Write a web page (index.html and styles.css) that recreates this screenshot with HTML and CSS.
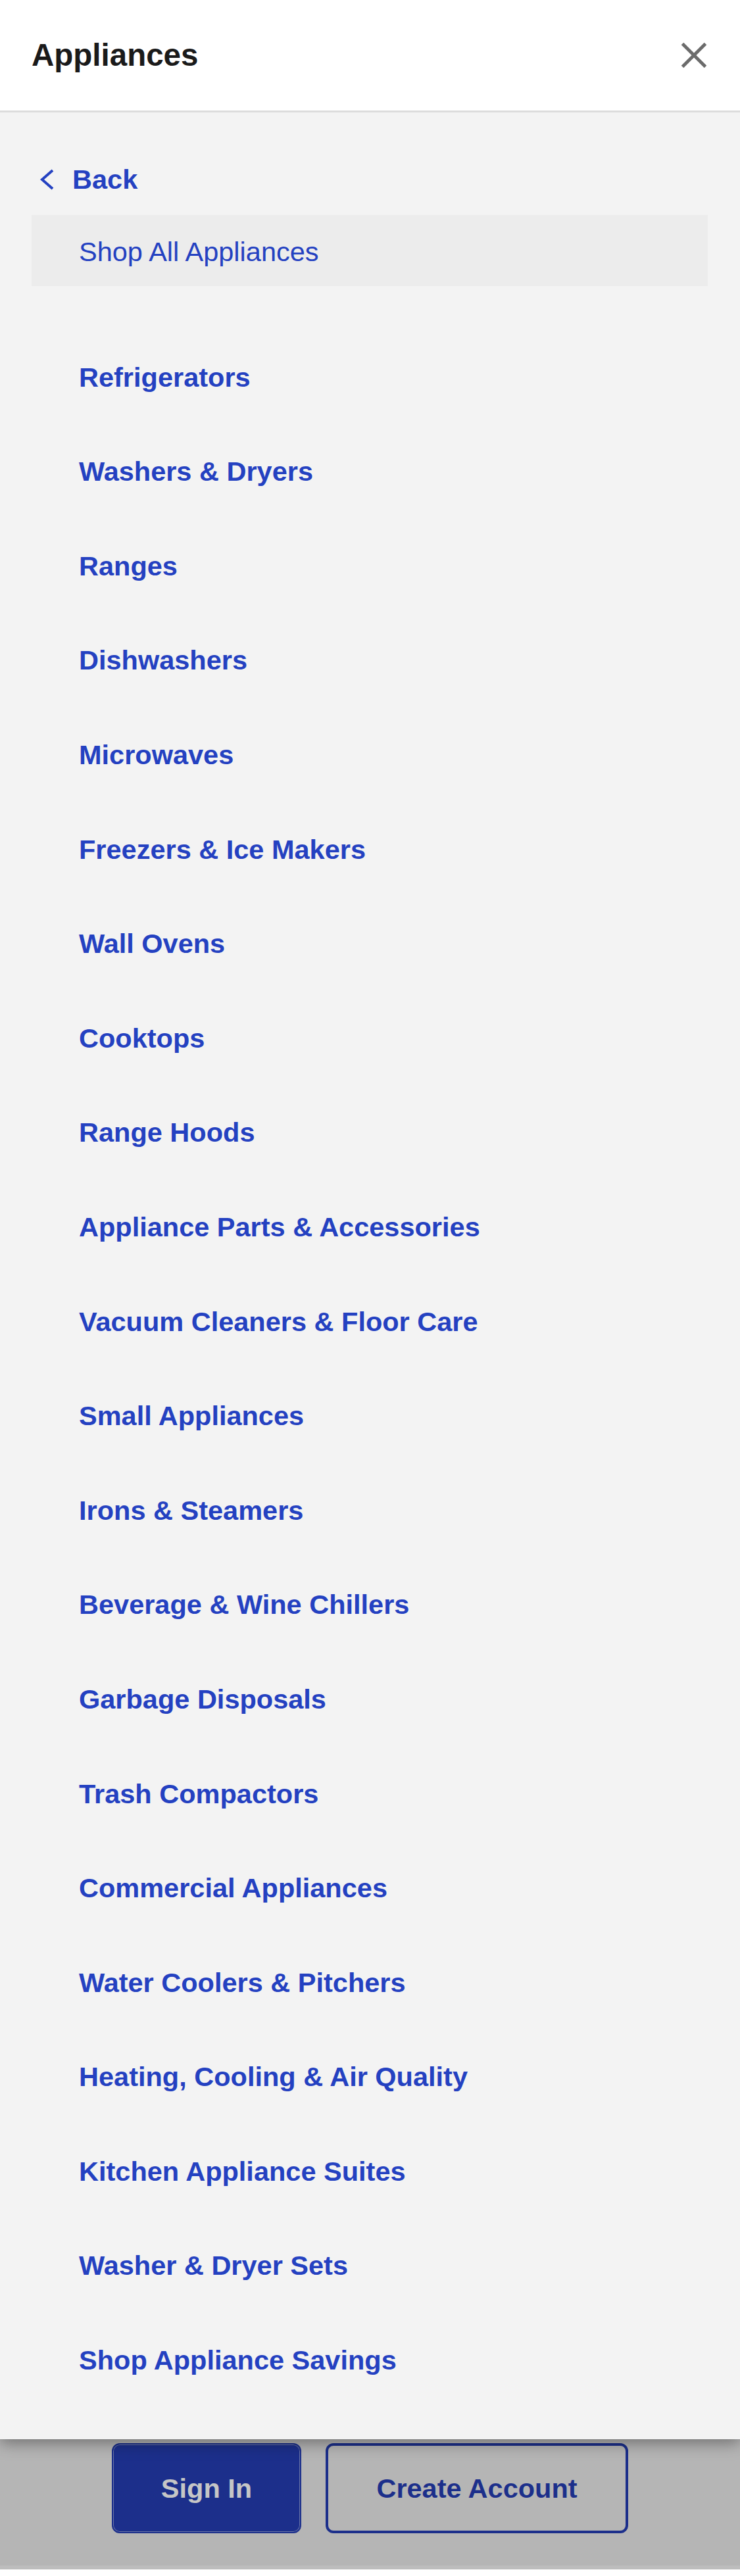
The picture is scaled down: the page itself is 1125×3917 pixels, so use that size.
FILE: index.html
```html
<!DOCTYPE html>
<html lang="en">
<head>
<meta charset="utf-8">
<title>Appliances</title>
<link rel="stylesheet" href="styles.css">
</head>
<body>
<div class="panel">
  <header class="panel-header">
    <h1 class="panel-title">Appliances</h1>
    <button class="close-btn" aria-label="Close">
      <svg width="40" height="40" viewBox="0 0 40 40"><path d="M2.5 2.5 L37.5 37.5 M37.5 2.5 L2.5 37.5" stroke="#6b6b6b" stroke-width="5" stroke-linecap="butt" fill="none"/></svg>
    </button>
  </header>
  <div class="panel-body">
    <a class="back-link" href="#">
      <svg class="back-icon" width="22" height="32" viewBox="0 0 22 32"><path d="M19 2 L3 16 L19 30" stroke="#2441c1" stroke-width="4" fill="none" stroke-linejoin="miter"/></svg>
      <span>Back</span>
    </a>
    <a class="shop-all" href="#">Shop All Appliances</a>
    <ul class="cat-list">
      <li><a href="#">Refrigerators</a></li>
      <li><a href="#">Washers &amp; Dryers</a></li>
      <li><a href="#">Ranges</a></li>
      <li><a href="#">Dishwashers</a></li>
      <li><a href="#">Microwaves</a></li>
      <li><a href="#">Freezers &amp; Ice Makers</a></li>
      <li><a href="#">Wall Ovens</a></li>
      <li><a href="#">Cooktops</a></li>
      <li><a href="#">Range Hoods</a></li>
      <li><a href="#">Appliance Parts &amp; Accessories</a></li>
      <li><a href="#">Vacuum Cleaners &amp; Floor Care</a></li>
      <li><a href="#">Small Appliances</a></li>
      <li><a href="#">Irons &amp; Steamers</a></li>
      <li><a href="#">Beverage &amp; Wine Chillers</a></li>
      <li><a href="#">Garbage Disposals</a></li>
      <li><a href="#">Trash Compactors</a></li>
      <li><a href="#">Commercial Appliances</a></li>
      <li><a href="#">Water Coolers &amp; Pitchers</a></li>
      <li><a href="#">Heating, Cooling &amp; Air Quality</a></li>
      <li><a href="#">Kitchen Appliance Suites</a></li>
      <li><a href="#">Washer &amp; Dryer Sets</a></li>
      <li><a href="#">Shop Appliance Savings</a></li>
    </ul>
  </div>
</div>
<div class="footer">
  <div class="footer-buttons">
    <a class="btn btn-primary" href="#">Sign In</a>
    <a class="btn btn-outline" href="#">Create Account</a>
  </div>
</div>
<div class="footer-strip"></div>
</body>
</html>
```
FILE: styles.css
```css
html, body {
  margin: 0;
  padding: 0;
}
body {
  background: #ffffff;
  font-family: "Liberation Sans", Arial, Helvetica, sans-serif;
  width: 1125px;
}
a {
  text-decoration: none;
}
.panel {
  position: relative;
  z-index: 1;
  box-shadow: 0 6px 22px rgba(0, 0, 0, 0.38);
  background: #f3f3f3;
}
.panel-header {
  height: 168px;
  background: #ffffff;
  border-bottom: 3px solid #dcdcdc;
  display: flex;
  align-items: center;
  justify-content: space-between;
  padding: 0 48px 0 48px;
}
.panel-title {
  margin: 0;
  font-size: 47.5px;
  font-weight: 700;
  color: #1a1a1a;
  line-height: 1;
}
.close-btn {
  background: none;
  border: 0;
  padding: 0;
  margin: 0 2px 0 0;
  width: 40px;
  height: 40px;
  display: block;
}
.close-btn svg {
  display: block;
}
.panel-body {
  padding: 77px 0 48.6px 0;
}
.back-link {
  display: flex;
  align-items: center;
  padding-left: 61px;
  height: 50px;
  font-size: 41.5px;
  font-weight: 700;
  line-height: 50px;
  color: #2441c1;
}
.back-icon {
  display: block;
  margin-right: 27px;
}
.shop-all {
  display: block;
  margin: 29px 49px 0 48px;
  padding: 31px 72px 27px 72px;
  background: #ececec;
  font-size: 41.5px;
  font-weight: 400;
  line-height: 50px;
  color: #2441c1;
}
.cat-list {
  list-style: none;
  margin: 66.8px 0 0 0;
  padding: 0;
}
.cat-list li {
  padding: 46.81px 0 46.81px 120px;
}
.cat-list a {
  display: block;
  font-size: 41.5px;
  font-weight: 700;
  line-height: 50px;
  color: #2441c1;
}
.footer {
  height: 192px;
  background: #b5b5b5;
}
.footer-buttons {
  display: flex;
  gap: 37px;
  padding: 6px 0 0 170px;
}
.btn {
  box-sizing: border-box;
  height: 137px;
  display: flex;
  align-items: center;
  justify-content: center;
  font-size: 41.5px;
  font-weight: 700;
  border-radius: 12px;
}
.btn-primary {
  width: 288px;
  background: #1c2f8b;
  color: #c6c6c6;
  border: 2px solid #1c2f8b;
  box-shadow: inset 0 0 0 1px #6c77a8;
}
.btn-outline {
  width: 460px;
  border: 4px solid #1c2f8b;
  color: #1c2f8b;
  background: transparent;
}
.footer-strip {
  height: 6px;
  background: #bdbdbd;
}
```
